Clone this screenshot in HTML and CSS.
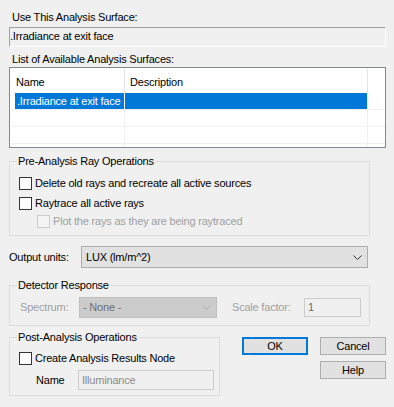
FILE: index.html
```html
<!DOCTYPE html>
<html lang="en">
<head>
<meta charset="UTF-8">
<title>Analysis Surface</title>
<link rel="stylesheet" href="styles.css">
</head>
<body>
<div class="dialog">
    <div class="caption">Use This Analysis Surface:</div>
    <div class="textbox">.Irradiance at exit face</div>

    <div class="caption caption-list">List of Available Analysis Surfaces:</div>
    <div class="listview">
        <div class="lv-head">
            <div class="col c1">Name</div>
            <div class="col c2">Description</div>
            <div class="col c3"></div>
        </div>
        <div class="lv-row selected">
            <div class="col c1"><span class="sel">.Irradiance at exit face</span></div>
            <div class="col c2"></div>
            <div class="col c3"></div>
        </div>
        <div class="lv-row">
            <div class="col c1"></div>
            <div class="col c2"></div>
            <div class="col c3"></div>
        </div>
        <div class="lv-row">
            <div class="col c1"></div>
            <div class="col c2"></div>
            <div class="col c3"></div>
        </div>
        <div class="lv-row">
            <div class="col c1"></div>
            <div class="col c2"></div>
            <div class="col c3"></div>
        </div>
    </div>

    <fieldset class="group g-pre">
        <legend>Pre-Analysis Ray Operations</legend>
        <div class="check r1"><span class="box"></span>Delete old rays and recreate all active sources</div>
        <div class="check r2"><span class="box"></span>Raytrace all active rays</div>
        <div class="check r3 disabled"><span class="box"></span>Plot the rays as they are being raytraced</div>
    </fieldset>

    <div class="units-row">
        <span class="units-label">Output units:</span>
        <div class="combo">
            <span>LUX (lm/m^2)</span>
            <svg width="9" height="5" viewBox="0 0 9 5"><polyline points="0.5,0.5 4.5,4.5 8.5,0.5" fill="none" stroke="#333" stroke-width="1"/></svg>
        </div>
    </div>

    <fieldset class="group g-det">
        <legend>Detector Response</legend>
        <div class="det-row">
            <span class="dim spec-label">Spectrum:</span>
            <div class="combo combo-off">
                <span>- None -</span>
                <svg width="9" height="5" viewBox="0 0 9 5"><polyline points="0.5,0.5 4.5,4.5 8.5,0.5" fill="none" stroke="#a8a8a8" stroke-width="1"/></svg>
            </div>
            <span class="dim scale-label">Scale factor:</span>
            <div class="field field-scale">1</div>
        </div>
    </fieldset>

    <div class="bottom">
        <fieldset class="group g-post">
            <legend>Post-Analysis Operations</legend>
            <div class="check r1"><span class="box"></span>Create Analysis Results Node</div>
            <div class="name-row">
                <span class="name-label">Name</span>
                <div class="field field-name">Illuminance</div>
            </div>
        </fieldset>
        <div class="buttons">
            <div class="btn btn-default">OK</div>
            <div class="btn">Cancel</div>
            <div class="btn btn-help">Help</div>
        </div>
    </div>
</div>
</body>
</html>
```

FILE: styles.css
```css
* {
    box-sizing: border-box;
}
body {
    margin: 0;
    background: #f0f0f0;
    font-family: "Liberation Sans", Arial, sans-serif;
    font-size: 11px;
    line-height: 13px;
    letter-spacing: -0.2px;
    color: #000;
}
.dialog {
    width: 394px;
    height: 407px;
    padding: 11px 8px 0 9px;
}
.caption {
    margin-left: 3px;
    height: 13px;
}
.textbox {
    margin-top: 3px;
    height: 20px;
    padding-top: 2px;
    border: 1px solid #a0a0a0;
    border-right-color: #fff;
    border-bottom-color: #fff;
}
.caption-list {
    margin-top: 6px;
}

/* list view */
.listview {
    margin-top: 1px;
    height: 81px;
    border: 1px solid #828790;
    background: #fff;
    padding-left: 1px;
    overflow: hidden;
}
.lv-head,
.lv-row {
    display: flex;
}
.lv-head {
    height: 25px;
}
.lv-head .col {
    padding: 7px 0 0 5px;
    border-right: 1px solid #e5e5e5;
    margin-top: 1px;
}
.lv-head .c3 {
    border-right: none;
}
.c1 {
    width: 114px;
}
.c2 {
    width: 243px;
}
.c3 {
    flex: 1;
}
.lv-row {
    height: 17px;
    line-height: 16px;
    border-bottom: 1px solid #f0f0f0;
}
.lv-row .col {
    border-right: 1px solid #f0f0f0;
}
.lv-row .c3 {
    border-right: none;
}
.lv-row.selected .c1 {
    padding-left: 4px;
    border-right-color: #fff;
}
.sel {
    display: block;
    height: 16px;
    padding-left: 2px;
    background: #0078d7;
    color: #fff;
    white-space: nowrap;
}
.lv-row.selected .c2 {
    background: #0078d7;
}

/* group boxes */
.group {
    margin: 0;
    padding: 0;
    border: 1px solid #dcdcdc;
    min-width: 0;
}
.group legend {
    margin-left: 7px;
    padding: 0 1px;
    line-height: 13px;
}
.g-pre {
    width: 361px;
    margin-top: 7px;
    padding: 7px 0 5px;
}
.check {
    display: flex;
    align-items: center;
    height: 17px;
    padding-left: 9px;
}
.check .box {
    width: 13px;
    height: 13px;
    margin-right: 3px;
    border: 1px solid #333;
    background: #fff;
}
.g-pre .r2 {
    margin-top: 3px;
}
.g-pre .r3 {
    margin-top: 1px;
}
.check.disabled {
    padding-left: 27px;
    color: #a0a0a0;
}
.check.disabled .box {
    border-color: #cccccc;
    background: #f3f3f3;
}

/* output units */
.units-row {
    display: flex;
    align-items: center;
    margin-top: 10px;
    height: 22px;
}
.units-label {
    width: 72px;
}
.combo {
    display: flex;
    align-items: center;
    justify-content: space-between;
    width: 287px;
    height: 22px;
    padding: 0 5px 0 4px;
    background: #e1e1e1;
    border: 1px solid #adadad;
}

/* detector */
.g-det {
    width: 361px;
    margin-top: 11px;
    padding: 5px 0 7px;
}
.det-row {
    display: flex;
    align-items: center;
    height: 21px;
    padding-left: 10px;
}
.dim {
    color: #a0a0a0;
}
.spec-label {
    width: 59px;
}
.combo-off {
    width: 138px;
    height: 21px;
    padding: 0 5px 0 3px;
    background: #cccccc;
    border-color: #bfbfbf;
    color: #6d6d6d;
}
.scale-label {
    width: 72px;
    margin-left: 15px;
}
.field {
    height: 19px;
    padding: 2px 0 0 3px;
    border: 1px solid #cccccc;
    background: #f0f0f0;
    color: #6d6d6d;
}
.field-scale {
    width: 57px;
}

/* bottom part */
.bottom {
    display: flex;
    align-items: flex-start;
    margin-top: 5px;
}
.g-post {
    width: 212px;
    padding: 6px 0 5px;
}
.name-row {
    display: flex;
    align-items: center;
    margin-top: 3px;
    padding-left: 26px;
}
.name-label {
    width: 42px;
}
.field-name {
    width: 136px;
    height: 20px;
    padding-top: 3px;
    color: #8a8a8a;
}
.buttons {
    display: grid;
    grid-template-columns: 66px 66px;
    column-gap: 12px;
    row-gap: 6px;
    margin: 6px 0 0 22px;
}
.btn {
    height: 18px;
    border: 1px solid #adadad;
    background: #e1e1e1;
    text-align: center;
    line-height: 16px;
}
.btn-default {
    border: 2px solid #0078d7;
    line-height: 14px;
}
.btn-help {
    grid-column: 2;
}
```
